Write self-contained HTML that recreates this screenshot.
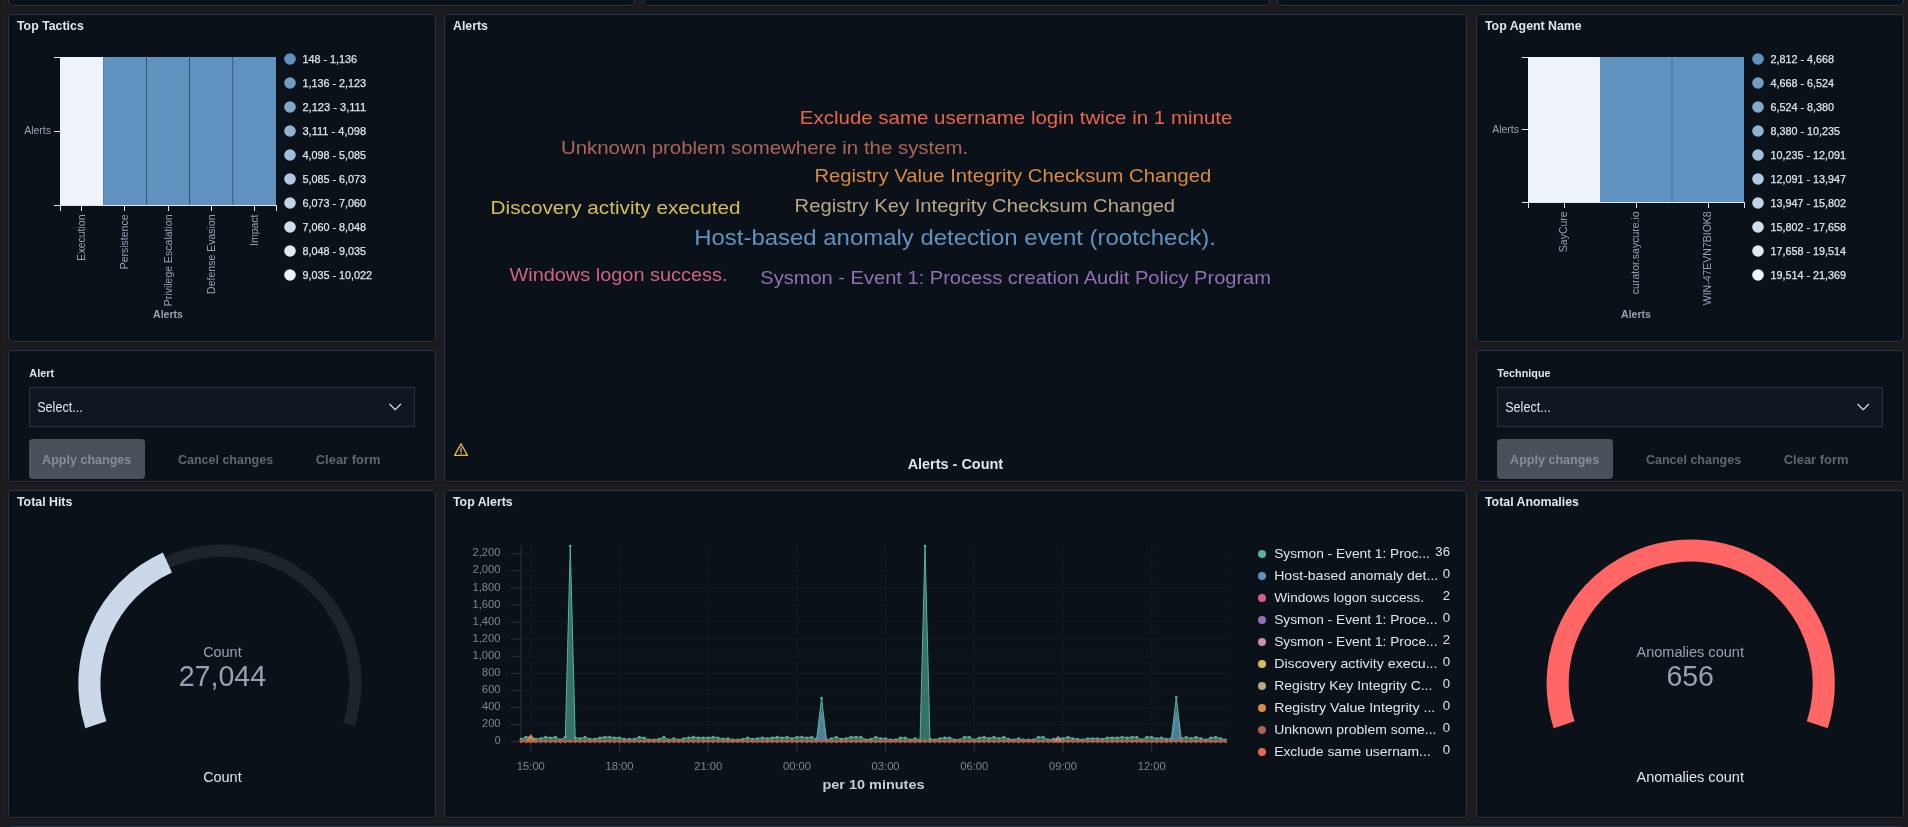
<!DOCTYPE html>
<html><head><meta charset="utf-8"><title>Dashboard</title>
<style>
html,body{margin:0;padding:0;}
body{width:1908px;height:827px;overflow:hidden;background:#1c1c20;position:relative;font-family:"Liberation Sans", sans-serif;}
.p{position:absolute;box-sizing:border-box;background:#0b1118;border:1px solid #283646;border-radius:4px;box-shadow:0 1px 2px rgba(0,0,0,0.35);}
svg{position:absolute;left:0;top:0;will-change:transform;}
svg text{font-family:"Liberation Sans", sans-serif;}
</style></head><body>

<div class="p" style="left:8px;top:-100px;width:627px;height:106px"></div>
<div class="p" style="left:643px;top:-100px;width:627px;height:106px"></div>
<div class="p" style="left:1277px;top:-100px;width:627px;height:106px"></div>
<div class="p" style="left:8px;top:14px;width:428px;height:328px"></div>
<div class="p" style="left:444px;top:14px;width:1023px;height:468px"></div>
<div class="p" style="left:1476px;top:14px;width:428px;height:328px"></div>
<div class="p" style="left:8px;top:350px;width:428px;height:132px"></div>
<div class="p" style="left:1476px;top:350px;width:428px;height:132px"></div>
<div class="p" style="left:8px;top:490px;width:428px;height:328px"></div>
<div class="p" style="left:444px;top:490px;width:1023px;height:328px"></div>
<div class="p" style="left:1476px;top:490px;width:428px;height:328px"></div>
<div class="p" style="left:8px;top:826px;width:1896px;height:100px"></div>
<svg width="1908" height="827" viewBox="0 0 1908 827">
<text x="17.00" y="30.00" font-size="12.35" fill="#dfe5ef" font-weight="bold">Top Tactics</text>
<text x="453.00" y="30.00" font-size="12.35" fill="#dfe5ef" font-weight="bold">Alerts</text>
<text x="1485.00" y="30.00" font-size="12.35" fill="#dfe5ef" font-weight="bold">Top Agent Name</text>
<text x="17.00" y="506.00" font-size="12.35" fill="#dfe5ef" font-weight="bold">Total Hits</text>
<text x="453.00" y="506.00" font-size="12.35" fill="#dfe5ef" font-weight="bold">Top Alerts</text>
<text x="1485.00" y="506.00" font-size="12.35" fill="#dfe5ef" font-weight="bold">Total Anomalies</text>
<rect x="60.00" y="57" width="43.20" height="148" fill="#eff3fa"/>
<rect x="103.20" y="57" width="43.20" height="148" fill="#6092c0"/>
<rect x="146.40" y="57" width="43.20" height="148" fill="#6092c0"/>
<rect x="189.60" y="57" width="43.20" height="148" fill="#6092c0"/>
<rect x="232.80" y="57" width="43.20" height="148" fill="#6092c0"/>
<rect x="145.90" y="57" width="1" height="148.4" fill="#0b1118" fill-opacity="0.3"/>
<rect x="189.10" y="57" width="1" height="148.4" fill="#0b1118" fill-opacity="0.3"/>
<rect x="232.30" y="57" width="1" height="148.4" fill="#0b1118" fill-opacity="0.3"/>
<rect x="54" y="57" width="6" height="1" fill="#e2e5ea"/>
<rect x="54" y="131" width="6" height="1" fill="#e2e5ea"/>
<rect x="54" y="205" width="223" height="1" fill="#e2e5ea"/>
<rect x="60" y="206" width="1" height="5" fill="#e2e5ea"/>
<rect x="81" y="206" width="1" height="5" fill="#e2e5ea"/>
<rect x="124" y="206" width="1" height="5" fill="#e2e5ea"/>
<rect x="168" y="206" width="1" height="5" fill="#e2e5ea"/>
<rect x="211" y="206" width="1" height="5" fill="#e2e5ea"/>
<rect x="254" y="206" width="1" height="5" fill="#e2e5ea"/>
<rect x="276" y="206" width="1" height="5" fill="#e2e5ea"/>
<text transform="translate(85.20,214.5) rotate(-90)" x="0" y="0" font-size="10.5" fill="#98a2b3" text-anchor="end">Execution</text>
<text transform="translate(128.40,214.5) rotate(-90)" x="0" y="0" font-size="10.5" fill="#98a2b3" text-anchor="end">Persistence</text>
<text transform="translate(171.60,214.5) rotate(-90)" x="0" y="0" font-size="10.5" fill="#98a2b3" text-anchor="end">Privilege Escalation</text>
<text transform="translate(214.80,214.5) rotate(-90)" x="0" y="0" font-size="10.5" fill="#98a2b3" text-anchor="end">Defense Evasion</text>
<text transform="translate(258.00,214.5) rotate(-90)" x="0" y="0" font-size="10.5" fill="#98a2b3" text-anchor="end">Impact</text>
<text x="168.00" y="317.50" font-size="10.5" fill="#98a2b3" font-weight="bold" text-anchor="middle">Alerts</text>
<text x="51.00" y="134.20" font-size="10.5" fill="#98a2b3" text-anchor="end">Alerts</text>
<circle cx="290" cy="59" r="5.8" fill="#6092c0"/>
<text x="302.40" y="63.20" font-size="11.6" fill="#dfe5ef" textLength="54.69" lengthAdjust="spacingAndGlyphs" stroke="#dfe5ef" stroke-width="0.25">148 - 1,136</text>
<circle cx="290" cy="83" r="5.8" fill="#709dc7"/>
<text x="302.40" y="87.20" font-size="11.6" fill="#dfe5ef" textLength="63.66" lengthAdjust="spacingAndGlyphs" stroke="#dfe5ef" stroke-width="0.25">1,136 - 2,123</text>
<circle cx="290" cy="107" r="5.8" fill="#80a8cd"/>
<text x="302.40" y="111.20" font-size="11.6" fill="#dfe5ef" textLength="63.66" lengthAdjust="spacingAndGlyphs" stroke="#dfe5ef" stroke-width="0.25">2,123 - 3,111</text>
<circle cx="290" cy="131" r="5.8" fill="#90b3d4"/>
<text x="302.40" y="135.20" font-size="11.6" fill="#dfe5ef" textLength="63.66" lengthAdjust="spacingAndGlyphs" stroke="#dfe5ef" stroke-width="0.25">3,111 - 4,098</text>
<circle cx="290" cy="155" r="5.8" fill="#a0beda"/>
<text x="302.40" y="159.20" font-size="11.6" fill="#dfe5ef" textLength="63.66" lengthAdjust="spacingAndGlyphs" stroke="#dfe5ef" stroke-width="0.25">4,098 - 5,085</text>
<circle cx="290" cy="179" r="5.8" fill="#b0c8e1"/>
<text x="302.40" y="183.20" font-size="11.6" fill="#dfe5ef" textLength="63.66" lengthAdjust="spacingAndGlyphs" stroke="#dfe5ef" stroke-width="0.25">5,085 - 6,073</text>
<circle cx="290" cy="203" r="5.8" fill="#c0d3e7"/>
<text x="302.40" y="207.20" font-size="11.6" fill="#dfe5ef" textLength="63.66" lengthAdjust="spacingAndGlyphs" stroke="#dfe5ef" stroke-width="0.25">6,073 - 7,060</text>
<circle cx="290" cy="227" r="5.8" fill="#d0deee"/>
<text x="302.40" y="231.20" font-size="11.6" fill="#dfe5ef" textLength="63.66" lengthAdjust="spacingAndGlyphs" stroke="#dfe5ef" stroke-width="0.25">7,060 - 8,048</text>
<circle cx="290" cy="251" r="5.8" fill="#e0e9f4"/>
<text x="302.40" y="255.20" font-size="11.6" fill="#dfe5ef" textLength="63.66" lengthAdjust="spacingAndGlyphs" stroke="#dfe5ef" stroke-width="0.25">8,048 - 9,035</text>
<circle cx="290" cy="275" r="5.8" fill="#f0f4fb"/>
<text x="302.40" y="279.20" font-size="11.6" fill="#dfe5ef" textLength="69.63" lengthAdjust="spacingAndGlyphs" stroke="#dfe5ef" stroke-width="0.25">9,035 - 10,022</text>
<rect x="1528.00" y="57" width="72.00" height="145" fill="#eff3fa"/>
<rect x="1600.00" y="57" width="72.00" height="145" fill="#6092c0"/>
<rect x="1672.00" y="57" width="72.00" height="145" fill="#6092c0"/>
<rect x="1671.00" y="57" width="2" height="145" fill="#0b1118" fill-opacity="0.12"/>
<rect x="1522" y="57" width="6" height="1" fill="#e2e5ea"/>
<rect x="1522" y="129" width="6" height="1" fill="#e2e5ea"/>
<rect x="1522" y="202" width="223" height="1" fill="#e2e5ea"/>
<rect x="1528" y="203" width="1" height="5" fill="#e2e5ea"/>
<rect x="1564" y="203" width="1" height="5" fill="#e2e5ea"/>
<rect x="1636" y="203" width="1" height="5" fill="#e2e5ea"/>
<rect x="1708" y="203" width="1" height="5" fill="#e2e5ea"/>
<rect x="1744" y="203" width="1" height="5" fill="#e2e5ea"/>
<text transform="translate(1567.00,211.3) rotate(-90)" x="0" y="0" font-size="10.5" fill="#98a2b3" text-anchor="end">SayCure</text>
<text transform="translate(1639.00,211.3) rotate(-90)" x="0" y="0" font-size="10.5" fill="#98a2b3" text-anchor="end">curator.saycure.io</text>
<text transform="translate(1711.00,211.3) rotate(-90)" x="0" y="0" font-size="10.5" fill="#98a2b3" text-anchor="end">WIN-47EVN7BIOK8</text>
<text x="1636.00" y="317.50" font-size="10.5" fill="#98a2b3" font-weight="bold" text-anchor="middle">Alerts</text>
<text x="1519.00" y="132.50" font-size="10.5" fill="#98a2b3" text-anchor="end">Alerts</text>
<circle cx="1758" cy="59" r="5.8" fill="#6092c0"/>
<text x="1770.40" y="63.20" font-size="11.6" fill="#dfe5ef" textLength="63.66" lengthAdjust="spacingAndGlyphs" stroke="#dfe5ef" stroke-width="0.25">2,812 - 4,668</text>
<circle cx="1758" cy="83" r="5.8" fill="#709dc7"/>
<text x="1770.40" y="87.20" font-size="11.6" fill="#dfe5ef" textLength="63.66" lengthAdjust="spacingAndGlyphs" stroke="#dfe5ef" stroke-width="0.25">4,668 - 6,524</text>
<circle cx="1758" cy="107" r="5.8" fill="#80a8cd"/>
<text x="1770.40" y="111.20" font-size="11.6" fill="#dfe5ef" textLength="63.66" lengthAdjust="spacingAndGlyphs" stroke="#dfe5ef" stroke-width="0.25">6,524 - 8,380</text>
<circle cx="1758" cy="131" r="5.8" fill="#90b3d4"/>
<text x="1770.40" y="135.20" font-size="11.6" fill="#dfe5ef" textLength="69.63" lengthAdjust="spacingAndGlyphs" stroke="#dfe5ef" stroke-width="0.25">8,380 - 10,235</text>
<circle cx="1758" cy="155" r="5.8" fill="#a0beda"/>
<text x="1770.40" y="159.20" font-size="11.6" fill="#dfe5ef" textLength="75.61" lengthAdjust="spacingAndGlyphs" stroke="#dfe5ef" stroke-width="0.25">10,235 - 12,091</text>
<circle cx="1758" cy="179" r="5.8" fill="#b0c8e1"/>
<text x="1770.40" y="183.20" font-size="11.6" fill="#dfe5ef" textLength="75.61" lengthAdjust="spacingAndGlyphs" stroke="#dfe5ef" stroke-width="0.25">12,091 - 13,947</text>
<circle cx="1758" cy="203" r="5.8" fill="#c0d3e7"/>
<text x="1770.40" y="207.20" font-size="11.6" fill="#dfe5ef" textLength="75.61" lengthAdjust="spacingAndGlyphs" stroke="#dfe5ef" stroke-width="0.25">13,947 - 15,802</text>
<circle cx="1758" cy="227" r="5.8" fill="#d0deee"/>
<text x="1770.40" y="231.20" font-size="11.6" fill="#dfe5ef" textLength="75.61" lengthAdjust="spacingAndGlyphs" stroke="#dfe5ef" stroke-width="0.25">15,802 - 17,658</text>
<circle cx="1758" cy="251" r="5.8" fill="#e0e9f4"/>
<text x="1770.40" y="255.20" font-size="11.6" fill="#dfe5ef" textLength="75.61" lengthAdjust="spacingAndGlyphs" stroke="#dfe5ef" stroke-width="0.25">17,658 - 19,514</text>
<circle cx="1758" cy="275" r="5.8" fill="#f0f4fb"/>
<text x="1770.40" y="279.20" font-size="11.6" fill="#dfe5ef" textLength="75.61" lengthAdjust="spacingAndGlyphs" stroke="#dfe5ef" stroke-width="0.25">19,514 - 21,369</text>
<text x="799.80" y="123.60" font-size="18.31" fill="#e7664c" textLength="432.60" lengthAdjust="spacingAndGlyphs">Exclude same username login twice in 1 minute</text>
<text x="560.90" y="154.00" font-size="18.31" fill="#aa6556" textLength="407.40" lengthAdjust="spacingAndGlyphs">Unknown problem somewhere in the system.</text>
<text x="814.40" y="182.10" font-size="18.31" fill="#da8b45" textLength="396.80" lengthAdjust="spacingAndGlyphs">Registry Value Integrity Checksum Changed</text>
<text x="490.60" y="213.90" font-size="18.31" fill="#d6bf57" textLength="249.90" lengthAdjust="spacingAndGlyphs">Discovery activity executed</text>
<text x="794.60" y="211.80" font-size="18.31" fill="#b9a888" textLength="380.50" lengthAdjust="spacingAndGlyphs">Registry Key Integrity Checksum Changed</text>
<text x="694.20" y="245.00" font-size="21.37" fill="#6092c0" textLength="521.80" lengthAdjust="spacingAndGlyphs">Host-based anomaly detection event (rootcheck).</text>
<text x="509.40" y="280.80" font-size="18.31" fill="#d36086" textLength="218.20" lengthAdjust="spacingAndGlyphs">Windows logon success.</text>
<text x="760.30" y="284.30" font-size="18.31" fill="#9170b8" textLength="510.70" lengthAdjust="spacingAndGlyphs">Sysmon - Event 1: Process creation Audit Policy Program</text>
<g transform="translate(454,443)" fill="none" stroke="#e9b85e" stroke-width="1.3" stroke-linejoin="round"><path d="M7,0.8 L13.4,12.4 L0.6,12.4 Z"/></g>
<rect x="460.4" y="447.3" width="1.3" height="4.8" fill="#e9b85e"/><rect x="460.4" y="453" width="1.3" height="1.1" fill="#e9b85e"/>
<text x="955.40" y="469.00" font-size="14" fill="#dfe5ef" font-weight="bold" text-anchor="middle" textLength="95.50" lengthAdjust="spacingAndGlyphs">Alerts - Count</text>
<text x="29.30" y="377.00" font-size="11" fill="#dfe5ef" font-weight="bold" textLength="24.70" lengthAdjust="spacingAndGlyphs">Alert</text>
<rect x="29.5" y="387.5" width="385" height="39" fill="#101721" stroke="#2b3340" stroke-width="1"/>
<text x="37.20" y="411.60" font-size="14" fill="#dfe5ef" textLength="45.50" lengthAdjust="spacingAndGlyphs">Select...</text>
<path d="M389.5,404 L395.2,409.6 L400.9,404" fill="none" stroke="#dfe5ef" stroke-width="1.2"/>
<rect x="29" y="439" width="116" height="40" rx="4" fill="#4b515b"/>
<text x="42.10" y="464.10" font-size="13" fill="#868d97" font-weight="bold" textLength="89.20" lengthAdjust="spacingAndGlyphs">Apply changes</text>
<text x="178.00" y="464.10" font-size="13" fill="#5f6670" font-weight="bold" textLength="95.10" lengthAdjust="spacingAndGlyphs">Cancel changes</text>
<text x="315.80" y="464.10" font-size="13" fill="#5f6670" font-weight="bold" textLength="64.60" lengthAdjust="spacingAndGlyphs">Clear form</text>
<text x="1497.30" y="377.00" font-size="11" fill="#dfe5ef" font-weight="bold" textLength="53.20" lengthAdjust="spacingAndGlyphs">Technique</text>
<rect x="1497.5" y="387.5" width="385" height="39" fill="#101721" stroke="#2b3340" stroke-width="1"/>
<text x="1505.20" y="411.60" font-size="14" fill="#dfe5ef" textLength="45.50" lengthAdjust="spacingAndGlyphs">Select...</text>
<path d="M1857.5,404 L1863.2,409.6 L1868.9,404" fill="none" stroke="#dfe5ef" stroke-width="1.2"/>
<rect x="1497" y="439" width="116" height="40" rx="4" fill="#4b515b"/>
<text x="1510.10" y="464.10" font-size="13" fill="#868d97" font-weight="bold" textLength="89.20" lengthAdjust="spacingAndGlyphs">Apply changes</text>
<text x="1646.00" y="464.10" font-size="13" fill="#5f6670" font-weight="bold" textLength="95.10" lengthAdjust="spacingAndGlyphs">Cancel changes</text>
<text x="1783.80" y="464.10" font-size="13" fill="#5f6670" font-weight="bold" textLength="64.60" lengthAdjust="spacingAndGlyphs">Clear form</text>
<path d="M90.01,726.62 A139.2,139.2 0 1 1 354.79,726.62 L342.99,722.78 A126.8,126.8 0 1 0 101.81,722.78 Z" fill="#1f232b"/>
<path d="M85.35,728.13 A144.1,144.1 0 0 1 162.85,552.38 L171.99,572.50 A122,122 0 0 0 106.37,721.30 Z" fill="#cbd8ea"/>
<text x="222.40" y="657.00" font-size="14" fill="#98a2b3" text-anchor="middle" textLength="38.50" lengthAdjust="spacingAndGlyphs">Count</text>
<text x="222.40" y="686.00" font-size="29" fill="#98a2b3" text-anchor="middle" textLength="87.50" lengthAdjust="spacingAndGlyphs">27,044</text>
<text x="222.40" y="782.00" font-size="14" fill="#dfe5ef" text-anchor="middle" textLength="38.50" lengthAdjust="spacingAndGlyphs">Count</text>
<path d="M1558.31,726.62 A139.2,139.2 0 1 1 1823.09,726.62 L1811.29,722.78 A126.8,126.8 0 1 0 1570.11,722.78 Z" fill="#1f232b"/>
<path d="M1553.65,728.13 A144.1,144.1 0 1 1 1827.75,728.13 L1806.73,721.30 A122,122 0 1 0 1574.67,721.30 Z" fill="#ff6666"/>
<text x="1690.20" y="657.00" font-size="14" fill="#98a2b3" text-anchor="middle" textLength="107.50" lengthAdjust="spacingAndGlyphs">Anomalies count</text>
<text x="1690.20" y="686.00" font-size="29" fill="#98a2b3" text-anchor="middle" textLength="47.50" lengthAdjust="spacingAndGlyphs">656</text>
<text x="1690.20" y="782.00" font-size="14" fill="#dfe5ef" text-anchor="middle" textLength="107.50" lengthAdjust="spacingAndGlyphs">Anomalies count</text>
<rect x="521" y="741.20" width="705" height="1" fill="#151b22"/>
<rect x="511" y="741.20" width="10" height="1" fill="#303236"/>
<text x="500.50" y="744.30" font-size="10.6" fill="#80858c" text-anchor="end" textLength="5.76" lengthAdjust="spacingAndGlyphs">0</text>
<rect x="521" y="724.12" width="705" height="1" fill="#151b22"/>
<rect x="511" y="724.12" width="10" height="1" fill="#303236"/>
<text x="500.50" y="727.22" font-size="10.6" fill="#80858c" text-anchor="end" textLength="18.49" lengthAdjust="spacingAndGlyphs">200</text>
<rect x="521" y="707.03" width="705" height="1" fill="#151b22"/>
<rect x="511" y="707.03" width="10" height="1" fill="#303236"/>
<text x="500.50" y="710.13" font-size="10.6" fill="#80858c" text-anchor="end" textLength="18.49" lengthAdjust="spacingAndGlyphs">400</text>
<rect x="521" y="689.95" width="705" height="1" fill="#151b22"/>
<rect x="511" y="689.95" width="10" height="1" fill="#303236"/>
<text x="500.50" y="693.05" font-size="10.6" fill="#80858c" text-anchor="end" textLength="18.49" lengthAdjust="spacingAndGlyphs">600</text>
<rect x="521" y="672.86" width="705" height="1" fill="#151b22"/>
<rect x="511" y="672.86" width="10" height="1" fill="#303236"/>
<text x="500.50" y="675.96" font-size="10.6" fill="#80858c" text-anchor="end" textLength="18.49" lengthAdjust="spacingAndGlyphs">800</text>
<rect x="521" y="655.78" width="705" height="1" fill="#151b22"/>
<rect x="511" y="655.78" width="10" height="1" fill="#303236"/>
<text x="500.50" y="658.88" font-size="10.6" fill="#80858c" text-anchor="end" textLength="28.03" lengthAdjust="spacingAndGlyphs">1,000</text>
<rect x="521" y="638.69" width="705" height="1" fill="#151b22"/>
<rect x="511" y="638.69" width="10" height="1" fill="#303236"/>
<text x="500.50" y="641.79" font-size="10.6" fill="#80858c" text-anchor="end" textLength="28.03" lengthAdjust="spacingAndGlyphs">1,200</text>
<rect x="521" y="621.61" width="705" height="1" fill="#151b22"/>
<rect x="511" y="621.61" width="10" height="1" fill="#303236"/>
<text x="500.50" y="624.71" font-size="10.6" fill="#80858c" text-anchor="end" textLength="28.03" lengthAdjust="spacingAndGlyphs">1,400</text>
<rect x="521" y="604.52" width="705" height="1" fill="#151b22"/>
<rect x="511" y="604.52" width="10" height="1" fill="#303236"/>
<text x="500.50" y="607.62" font-size="10.6" fill="#80858c" text-anchor="end" textLength="28.03" lengthAdjust="spacingAndGlyphs">1,600</text>
<rect x="521" y="587.44" width="705" height="1" fill="#151b22"/>
<rect x="511" y="587.44" width="10" height="1" fill="#303236"/>
<text x="500.50" y="590.54" font-size="10.6" fill="#80858c" text-anchor="end" textLength="28.03" lengthAdjust="spacingAndGlyphs">1,800</text>
<rect x="521" y="570.35" width="705" height="1" fill="#151b22"/>
<rect x="511" y="570.35" width="10" height="1" fill="#303236"/>
<text x="500.50" y="573.45" font-size="10.6" fill="#80858c" text-anchor="end" textLength="28.03" lengthAdjust="spacingAndGlyphs">2,000</text>
<rect x="521" y="553.27" width="705" height="1" fill="#151b22"/>
<rect x="511" y="553.27" width="10" height="1" fill="#303236"/>
<text x="500.50" y="556.37" font-size="10.6" fill="#80858c" text-anchor="end" textLength="28.03" lengthAdjust="spacingAndGlyphs">2,200</text>
<rect x="530.35" y="546" width="1" height="195.7" fill="#151b22"/>
<rect x="530.35" y="741.7" width="1" height="10" fill="#303236"/>
<text x="530.85" y="769.70" font-size="10.6" fill="#80858c" text-anchor="middle" textLength="28.00" lengthAdjust="spacingAndGlyphs">15:00</text>
<rect x="619.04" y="546" width="1" height="195.7" fill="#151b22"/>
<rect x="619.04" y="741.7" width="1" height="10" fill="#303236"/>
<text x="619.54" y="769.70" font-size="10.6" fill="#80858c" text-anchor="middle" textLength="28.00" lengthAdjust="spacingAndGlyphs">18:00</text>
<rect x="707.73" y="546" width="1" height="195.7" fill="#151b22"/>
<rect x="707.73" y="741.7" width="1" height="10" fill="#303236"/>
<text x="708.23" y="769.70" font-size="10.6" fill="#80858c" text-anchor="middle" textLength="28.00" lengthAdjust="spacingAndGlyphs">21:00</text>
<rect x="796.41" y="546" width="1" height="195.7" fill="#151b22"/>
<rect x="796.41" y="741.7" width="1" height="10" fill="#303236"/>
<text x="796.91" y="769.70" font-size="10.6" fill="#80858c" text-anchor="middle" textLength="28.00" lengthAdjust="spacingAndGlyphs">00:00</text>
<rect x="885.10" y="546" width="1" height="195.7" fill="#151b22"/>
<rect x="885.10" y="741.7" width="1" height="10" fill="#303236"/>
<text x="885.60" y="769.70" font-size="10.6" fill="#80858c" text-anchor="middle" textLength="28.00" lengthAdjust="spacingAndGlyphs">03:00</text>
<rect x="973.78" y="546" width="1" height="195.7" fill="#151b22"/>
<rect x="973.78" y="741.7" width="1" height="10" fill="#303236"/>
<text x="974.28" y="769.70" font-size="10.6" fill="#80858c" text-anchor="middle" textLength="28.00" lengthAdjust="spacingAndGlyphs">06:00</text>
<rect x="1062.47" y="546" width="1" height="195.7" fill="#151b22"/>
<rect x="1062.47" y="741.7" width="1" height="10" fill="#303236"/>
<text x="1062.97" y="769.70" font-size="10.6" fill="#80858c" text-anchor="middle" textLength="28.00" lengthAdjust="spacingAndGlyphs">09:00</text>
<rect x="1151.16" y="546" width="1" height="195.7" fill="#151b22"/>
<rect x="1151.16" y="741.7" width="1" height="10" fill="#303236"/>
<text x="1151.66" y="769.70" font-size="10.6" fill="#80858c" text-anchor="middle" textLength="28.00" lengthAdjust="spacingAndGlyphs">12:00</text>
<rect x="520.5" y="546" width="1" height="196.2" fill="#303236"/>
<text x="873.50" y="788.50" font-size="12.5" fill="#c9ced6" font-weight="bold" text-anchor="middle" textLength="102.00" lengthAdjust="spacingAndGlyphs">per 10 minutes</text>
<path d="M521.00,741.7 L521.00,739.14 L525.93,737.09 L530.85,737.09 L535.78,739.14 L540.71,738.45 L545.63,737.09 L550.56,737.77 L555.49,737.09 L560.42,739.82 L565.34,737.09 L570.27,546.08 L575.20,737.77 L580.12,738.45 L585.05,737.09 L589.98,739.14 L594.90,739.14 L599.83,737.77 L604.76,737.09 L609.69,737.09 L614.61,737.77 L619.54,737.77 L624.47,739.14 L629.39,739.14 L634.32,739.14 L639.25,737.09 L644.17,737.77 L649.10,739.82 L654.03,739.82 L658.96,739.14 L663.88,737.09 L668.81,739.82 L673.74,738.45 L678.66,739.82 L683.59,738.45 L688.52,737.77 L693.44,737.09 L698.37,737.77 L703.30,737.77 L708.23,737.77 L713.15,737.09 L718.08,737.77 L723.01,739.14 L727.93,738.45 L732.86,739.82 L737.79,739.82 L742.71,739.14 L747.64,737.77 L752.57,739.14 L757.50,738.45 L762.42,737.77 L767.35,738.45 L772.28,737.77 L777.20,737.09 L782.13,737.77 L787.06,737.09 L791.98,738.45 L796.91,737.09 L801.84,737.09 L806.77,737.77 L811.69,737.09 L816.62,739.14 L821.55,698.13 L826.47,739.82 L831.40,738.45 L836.33,737.09 L841.25,739.14 L846.18,738.45 L851.11,737.09 L856.04,737.09 L860.96,737.09 L865.89,739.82 L870.82,739.14 L875.74,737.09 L880.67,738.45 L885.60,738.45 L890.52,739.82 L895.45,739.82 L900.38,737.77 L905.31,737.77 L910.23,739.82 L915.16,738.45 L920.09,739.82 L925.01,546.08 L929.94,739.14 L934.87,739.82 L939.79,738.45 L944.72,737.77 L949.65,737.77 L954.58,739.82 L959.50,739.82 L964.43,737.09 L969.36,737.09 L974.28,739.82 L979.21,737.77 L984.14,737.09 L989.06,738.45 L993.99,737.09 L998.92,738.45 L1003.85,737.09 L1008.77,739.14 L1013.70,739.82 L1018.63,738.45 L1023.55,739.82 L1028.48,739.82 L1033.41,739.82 L1038.34,737.09 L1043.26,737.09 L1048.19,739.82 L1053.12,739.14 L1058.04,737.77 L1062.97,738.45 L1067.90,737.09 L1072.82,738.45 L1077.75,739.14 L1082.68,739.82 L1087.61,738.45 L1092.53,738.45 L1097.46,738.45 L1102.39,739.14 L1107.31,737.77 L1112.24,737.77 L1117.17,737.77 L1122.09,737.09 L1127.02,737.77 L1131.95,737.09 L1136.88,737.09 L1141.80,739.82 L1146.73,737.09 L1151.66,737.09 L1156.58,738.45 L1161.51,737.77 L1166.44,739.14 L1171.36,738.45 L1176.29,697.28 L1181.22,738.45 L1186.14,737.09 L1191.07,738.45 L1196.00,737.09 L1200.93,738.45 L1205.85,739.82 L1210.78,737.77 L1215.71,737.09 L1220.63,738.45 L1225.56,739.82 L1225.56,741.7 Z" fill="#54b399" fill-opacity="0.6"/>
<polyline points="521.00,739.14 525.93,737.09 530.85,737.09 535.78,739.14 540.71,738.45 545.63,737.09 550.56,737.77 555.49,737.09 560.42,739.82 565.34,737.09 570.27,546.08 575.20,737.77 580.12,738.45 585.05,737.09 589.98,739.14 594.90,739.14 599.83,737.77 604.76,737.09 609.69,737.09 614.61,737.77 619.54,737.77 624.47,739.14 629.39,739.14 634.32,739.14 639.25,737.09 644.17,737.77 649.10,739.82 654.03,739.82 658.96,739.14 663.88,737.09 668.81,739.82 673.74,738.45 678.66,739.82 683.59,738.45 688.52,737.77 693.44,737.09 698.37,737.77 703.30,737.77 708.23,737.77 713.15,737.09 718.08,737.77 723.01,739.14 727.93,738.45 732.86,739.82 737.79,739.82 742.71,739.14 747.64,737.77 752.57,739.14 757.50,738.45 762.42,737.77 767.35,738.45 772.28,737.77 777.20,737.09 782.13,737.77 787.06,737.09 791.98,738.45 796.91,737.09 801.84,737.09 806.77,737.77 811.69,737.09 816.62,739.14 821.55,698.13 826.47,739.82 831.40,738.45 836.33,737.09 841.25,739.14 846.18,738.45 851.11,737.09 856.04,737.09 860.96,737.09 865.89,739.82 870.82,739.14 875.74,737.09 880.67,738.45 885.60,738.45 890.52,739.82 895.45,739.82 900.38,737.77 905.31,737.77 910.23,739.82 915.16,738.45 920.09,739.82 925.01,546.08 929.94,739.14 934.87,739.82 939.79,738.45 944.72,737.77 949.65,737.77 954.58,739.82 959.50,739.82 964.43,737.09 969.36,737.09 974.28,739.82 979.21,737.77 984.14,737.09 989.06,738.45 993.99,737.09 998.92,738.45 1003.85,737.09 1008.77,739.14 1013.70,739.82 1018.63,738.45 1023.55,739.82 1028.48,739.82 1033.41,739.82 1038.34,737.09 1043.26,737.09 1048.19,739.82 1053.12,739.14 1058.04,737.77 1062.97,738.45 1067.90,737.09 1072.82,738.45 1077.75,739.14 1082.68,739.82 1087.61,738.45 1092.53,738.45 1097.46,738.45 1102.39,739.14 1107.31,737.77 1112.24,737.77 1117.17,737.77 1122.09,737.09 1127.02,737.77 1131.95,737.09 1136.88,737.09 1141.80,739.82 1146.73,737.09 1151.66,737.09 1156.58,738.45 1161.51,737.77 1166.44,739.14 1171.36,738.45 1176.29,697.28 1181.22,738.45 1186.14,737.09 1191.07,738.45 1196.00,737.09 1200.93,738.45 1205.85,739.82 1210.78,737.77 1215.71,737.09 1220.63,738.45 1225.56,739.82" fill="none" stroke="#54b399" stroke-width="1"/>
<circle cx="521.00" cy="739.14" r="1.3" fill="#54b399"/>
<circle cx="525.93" cy="737.09" r="1.3" fill="#54b399"/>
<circle cx="530.85" cy="737.09" r="1.3" fill="#54b399"/>
<circle cx="535.78" cy="739.14" r="1.3" fill="#54b399"/>
<circle cx="540.71" cy="738.45" r="1.3" fill="#54b399"/>
<circle cx="545.63" cy="737.09" r="1.3" fill="#54b399"/>
<circle cx="550.56" cy="737.77" r="1.3" fill="#54b399"/>
<circle cx="555.49" cy="737.09" r="1.3" fill="#54b399"/>
<circle cx="560.42" cy="739.82" r="1.3" fill="#54b399"/>
<circle cx="565.34" cy="737.09" r="1.3" fill="#54b399"/>
<circle cx="570.27" cy="546.08" r="1.3" fill="#54b399"/>
<circle cx="575.20" cy="737.77" r="1.3" fill="#54b399"/>
<circle cx="580.12" cy="738.45" r="1.3" fill="#54b399"/>
<circle cx="585.05" cy="737.09" r="1.3" fill="#54b399"/>
<circle cx="589.98" cy="739.14" r="1.3" fill="#54b399"/>
<circle cx="594.90" cy="739.14" r="1.3" fill="#54b399"/>
<circle cx="599.83" cy="737.77" r="1.3" fill="#54b399"/>
<circle cx="604.76" cy="737.09" r="1.3" fill="#54b399"/>
<circle cx="609.69" cy="737.09" r="1.3" fill="#54b399"/>
<circle cx="614.61" cy="737.77" r="1.3" fill="#54b399"/>
<circle cx="619.54" cy="737.77" r="1.3" fill="#54b399"/>
<circle cx="624.47" cy="739.14" r="1.3" fill="#54b399"/>
<circle cx="629.39" cy="739.14" r="1.3" fill="#54b399"/>
<circle cx="634.32" cy="739.14" r="1.3" fill="#54b399"/>
<circle cx="639.25" cy="737.09" r="1.3" fill="#54b399"/>
<circle cx="644.17" cy="737.77" r="1.3" fill="#54b399"/>
<circle cx="649.10" cy="739.82" r="1.3" fill="#54b399"/>
<circle cx="654.03" cy="739.82" r="1.3" fill="#54b399"/>
<circle cx="658.96" cy="739.14" r="1.3" fill="#54b399"/>
<circle cx="663.88" cy="737.09" r="1.3" fill="#54b399"/>
<circle cx="668.81" cy="739.82" r="1.3" fill="#54b399"/>
<circle cx="673.74" cy="738.45" r="1.3" fill="#54b399"/>
<circle cx="678.66" cy="739.82" r="1.3" fill="#54b399"/>
<circle cx="683.59" cy="738.45" r="1.3" fill="#54b399"/>
<circle cx="688.52" cy="737.77" r="1.3" fill="#54b399"/>
<circle cx="693.44" cy="737.09" r="1.3" fill="#54b399"/>
<circle cx="698.37" cy="737.77" r="1.3" fill="#54b399"/>
<circle cx="703.30" cy="737.77" r="1.3" fill="#54b399"/>
<circle cx="708.23" cy="737.77" r="1.3" fill="#54b399"/>
<circle cx="713.15" cy="737.09" r="1.3" fill="#54b399"/>
<circle cx="718.08" cy="737.77" r="1.3" fill="#54b399"/>
<circle cx="723.01" cy="739.14" r="1.3" fill="#54b399"/>
<circle cx="727.93" cy="738.45" r="1.3" fill="#54b399"/>
<circle cx="732.86" cy="739.82" r="1.3" fill="#54b399"/>
<circle cx="737.79" cy="739.82" r="1.3" fill="#54b399"/>
<circle cx="742.71" cy="739.14" r="1.3" fill="#54b399"/>
<circle cx="747.64" cy="737.77" r="1.3" fill="#54b399"/>
<circle cx="752.57" cy="739.14" r="1.3" fill="#54b399"/>
<circle cx="757.50" cy="738.45" r="1.3" fill="#54b399"/>
<circle cx="762.42" cy="737.77" r="1.3" fill="#54b399"/>
<circle cx="767.35" cy="738.45" r="1.3" fill="#54b399"/>
<circle cx="772.28" cy="737.77" r="1.3" fill="#54b399"/>
<circle cx="777.20" cy="737.09" r="1.3" fill="#54b399"/>
<circle cx="782.13" cy="737.77" r="1.3" fill="#54b399"/>
<circle cx="787.06" cy="737.09" r="1.3" fill="#54b399"/>
<circle cx="791.98" cy="738.45" r="1.3" fill="#54b399"/>
<circle cx="796.91" cy="737.09" r="1.3" fill="#54b399"/>
<circle cx="801.84" cy="737.09" r="1.3" fill="#54b399"/>
<circle cx="806.77" cy="737.77" r="1.3" fill="#54b399"/>
<circle cx="811.69" cy="737.09" r="1.3" fill="#54b399"/>
<circle cx="816.62" cy="739.14" r="1.3" fill="#54b399"/>
<circle cx="821.55" cy="698.13" r="1.3" fill="#54b399"/>
<circle cx="826.47" cy="739.82" r="1.3" fill="#54b399"/>
<circle cx="831.40" cy="738.45" r="1.3" fill="#54b399"/>
<circle cx="836.33" cy="737.09" r="1.3" fill="#54b399"/>
<circle cx="841.25" cy="739.14" r="1.3" fill="#54b399"/>
<circle cx="846.18" cy="738.45" r="1.3" fill="#54b399"/>
<circle cx="851.11" cy="737.09" r="1.3" fill="#54b399"/>
<circle cx="856.04" cy="737.09" r="1.3" fill="#54b399"/>
<circle cx="860.96" cy="737.09" r="1.3" fill="#54b399"/>
<circle cx="865.89" cy="739.82" r="1.3" fill="#54b399"/>
<circle cx="870.82" cy="739.14" r="1.3" fill="#54b399"/>
<circle cx="875.74" cy="737.09" r="1.3" fill="#54b399"/>
<circle cx="880.67" cy="738.45" r="1.3" fill="#54b399"/>
<circle cx="885.60" cy="738.45" r="1.3" fill="#54b399"/>
<circle cx="890.52" cy="739.82" r="1.3" fill="#54b399"/>
<circle cx="895.45" cy="739.82" r="1.3" fill="#54b399"/>
<circle cx="900.38" cy="737.77" r="1.3" fill="#54b399"/>
<circle cx="905.31" cy="737.77" r="1.3" fill="#54b399"/>
<circle cx="910.23" cy="739.82" r="1.3" fill="#54b399"/>
<circle cx="915.16" cy="738.45" r="1.3" fill="#54b399"/>
<circle cx="920.09" cy="739.82" r="1.3" fill="#54b399"/>
<circle cx="925.01" cy="546.08" r="1.3" fill="#54b399"/>
<circle cx="929.94" cy="739.14" r="1.3" fill="#54b399"/>
<circle cx="934.87" cy="739.82" r="1.3" fill="#54b399"/>
<circle cx="939.79" cy="738.45" r="1.3" fill="#54b399"/>
<circle cx="944.72" cy="737.77" r="1.3" fill="#54b399"/>
<circle cx="949.65" cy="737.77" r="1.3" fill="#54b399"/>
<circle cx="954.58" cy="739.82" r="1.3" fill="#54b399"/>
<circle cx="959.50" cy="739.82" r="1.3" fill="#54b399"/>
<circle cx="964.43" cy="737.09" r="1.3" fill="#54b399"/>
<circle cx="969.36" cy="737.09" r="1.3" fill="#54b399"/>
<circle cx="974.28" cy="739.82" r="1.3" fill="#54b399"/>
<circle cx="979.21" cy="737.77" r="1.3" fill="#54b399"/>
<circle cx="984.14" cy="737.09" r="1.3" fill="#54b399"/>
<circle cx="989.06" cy="738.45" r="1.3" fill="#54b399"/>
<circle cx="993.99" cy="737.09" r="1.3" fill="#54b399"/>
<circle cx="998.92" cy="738.45" r="1.3" fill="#54b399"/>
<circle cx="1003.85" cy="737.09" r="1.3" fill="#54b399"/>
<circle cx="1008.77" cy="739.14" r="1.3" fill="#54b399"/>
<circle cx="1013.70" cy="739.82" r="1.3" fill="#54b399"/>
<circle cx="1018.63" cy="738.45" r="1.3" fill="#54b399"/>
<circle cx="1023.55" cy="739.82" r="1.3" fill="#54b399"/>
<circle cx="1028.48" cy="739.82" r="1.3" fill="#54b399"/>
<circle cx="1033.41" cy="739.82" r="1.3" fill="#54b399"/>
<circle cx="1038.34" cy="737.09" r="1.3" fill="#54b399"/>
<circle cx="1043.26" cy="737.09" r="1.3" fill="#54b399"/>
<circle cx="1048.19" cy="739.82" r="1.3" fill="#54b399"/>
<circle cx="1053.12" cy="739.14" r="1.3" fill="#54b399"/>
<circle cx="1058.04" cy="737.77" r="1.3" fill="#54b399"/>
<circle cx="1062.97" cy="738.45" r="1.3" fill="#54b399"/>
<circle cx="1067.90" cy="737.09" r="1.3" fill="#54b399"/>
<circle cx="1072.82" cy="738.45" r="1.3" fill="#54b399"/>
<circle cx="1077.75" cy="739.14" r="1.3" fill="#54b399"/>
<circle cx="1082.68" cy="739.82" r="1.3" fill="#54b399"/>
<circle cx="1087.61" cy="738.45" r="1.3" fill="#54b399"/>
<circle cx="1092.53" cy="738.45" r="1.3" fill="#54b399"/>
<circle cx="1097.46" cy="738.45" r="1.3" fill="#54b399"/>
<circle cx="1102.39" cy="739.14" r="1.3" fill="#54b399"/>
<circle cx="1107.31" cy="737.77" r="1.3" fill="#54b399"/>
<circle cx="1112.24" cy="737.77" r="1.3" fill="#54b399"/>
<circle cx="1117.17" cy="737.77" r="1.3" fill="#54b399"/>
<circle cx="1122.09" cy="737.09" r="1.3" fill="#54b399"/>
<circle cx="1127.02" cy="737.77" r="1.3" fill="#54b399"/>
<circle cx="1131.95" cy="737.09" r="1.3" fill="#54b399"/>
<circle cx="1136.88" cy="737.09" r="1.3" fill="#54b399"/>
<circle cx="1141.80" cy="739.82" r="1.3" fill="#54b399"/>
<circle cx="1146.73" cy="737.09" r="1.3" fill="#54b399"/>
<circle cx="1151.66" cy="737.09" r="1.3" fill="#54b399"/>
<circle cx="1156.58" cy="738.45" r="1.3" fill="#54b399"/>
<circle cx="1161.51" cy="737.77" r="1.3" fill="#54b399"/>
<circle cx="1166.44" cy="739.14" r="1.3" fill="#54b399"/>
<circle cx="1171.36" cy="738.45" r="1.3" fill="#54b399"/>
<circle cx="1176.29" cy="697.28" r="1.3" fill="#54b399"/>
<circle cx="1181.22" cy="738.45" r="1.3" fill="#54b399"/>
<circle cx="1186.14" cy="737.09" r="1.3" fill="#54b399"/>
<circle cx="1191.07" cy="738.45" r="1.3" fill="#54b399"/>
<circle cx="1196.00" cy="737.09" r="1.3" fill="#54b399"/>
<circle cx="1200.93" cy="738.45" r="1.3" fill="#54b399"/>
<circle cx="1205.85" cy="739.82" r="1.3" fill="#54b399"/>
<circle cx="1210.78" cy="737.77" r="1.3" fill="#54b399"/>
<circle cx="1215.71" cy="737.09" r="1.3" fill="#54b399"/>
<circle cx="1220.63" cy="738.45" r="1.3" fill="#54b399"/>
<circle cx="1225.56" cy="739.82" r="1.3" fill="#54b399"/>
<path d="M521.00,741.7 L521.00,741.70 L525.93,741.70 L530.85,741.70 L535.78,741.70 L540.71,741.70 L545.63,741.70 L550.56,741.70 L555.49,741.70 L560.42,741.70 L565.34,741.70 L570.27,741.70 L575.20,741.70 L580.12,741.70 L585.05,741.70 L589.98,741.70 L594.90,741.70 L599.83,741.70 L604.76,741.70 L609.69,741.70 L614.61,741.70 L619.54,741.70 L624.47,741.70 L629.39,741.70 L634.32,741.70 L639.25,741.70 L644.17,741.70 L649.10,741.70 L654.03,741.70 L658.96,741.70 L663.88,741.70 L668.81,741.70 L673.74,741.70 L678.66,741.70 L683.59,741.70 L688.52,741.70 L693.44,741.70 L698.37,741.70 L703.30,741.70 L708.23,741.70 L713.15,741.70 L718.08,741.70 L723.01,741.70 L727.93,741.70 L732.86,741.70 L737.79,741.70 L742.71,741.70 L747.64,741.70 L752.57,741.70 L757.50,741.70 L762.42,741.70 L767.35,741.70 L772.28,741.70 L777.20,741.70 L782.13,741.70 L787.06,741.70 L791.98,741.70 L796.91,741.70 L801.84,741.70 L806.77,741.70 L811.69,741.70 L816.62,741.70 L821.55,712.66 L826.47,741.70 L831.40,741.70 L836.33,741.70 L841.25,741.70 L846.18,741.70 L851.11,741.70 L856.04,741.70 L860.96,741.70 L865.89,741.70 L870.82,741.70 L875.74,741.70 L880.67,741.70 L885.60,741.70 L890.52,741.70 L895.45,741.70 L900.38,741.70 L905.31,741.70 L910.23,741.70 L915.16,741.70 L920.09,741.70 L925.01,741.70 L929.94,741.70 L934.87,741.70 L939.79,741.70 L944.72,741.70 L949.65,741.70 L954.58,741.70 L959.50,741.70 L964.43,741.70 L969.36,741.70 L974.28,741.70 L979.21,741.70 L984.14,741.70 L989.06,741.70 L993.99,741.70 L998.92,741.70 L1003.85,741.70 L1008.77,741.70 L1013.70,741.70 L1018.63,741.70 L1023.55,741.70 L1028.48,741.70 L1033.41,741.70 L1038.34,741.70 L1043.26,741.70 L1048.19,741.70 L1053.12,741.70 L1058.04,741.70 L1062.97,741.70 L1067.90,741.70 L1072.82,741.70 L1077.75,741.70 L1082.68,741.70 L1087.61,741.70 L1092.53,741.70 L1097.46,741.70 L1102.39,741.70 L1107.31,741.70 L1112.24,741.70 L1117.17,741.70 L1122.09,741.70 L1127.02,741.70 L1131.95,741.70 L1136.88,741.70 L1141.80,741.70 L1146.73,741.70 L1151.66,741.70 L1156.58,741.70 L1161.51,741.70 L1166.44,741.70 L1171.36,741.70 L1176.29,712.66 L1181.22,741.70 L1186.14,741.70 L1191.07,741.70 L1196.00,741.70 L1200.93,741.70 L1205.85,741.70 L1210.78,741.70 L1215.71,741.70 L1220.63,741.70 L1225.56,741.70 L1225.56,741.7 Z" fill="#6092c0" fill-opacity="0.5"/>
<polyline points="521.00,741.70 525.93,741.70 530.85,741.70 535.78,741.70 540.71,741.70 545.63,741.70 550.56,741.70 555.49,741.70 560.42,741.70 565.34,741.70 570.27,741.70 575.20,741.70 580.12,741.70 585.05,741.70 589.98,741.70 594.90,741.70 599.83,741.70 604.76,741.70 609.69,741.70 614.61,741.70 619.54,741.70 624.47,741.70 629.39,741.70 634.32,741.70 639.25,741.70 644.17,741.70 649.10,741.70 654.03,741.70 658.96,741.70 663.88,741.70 668.81,741.70 673.74,741.70 678.66,741.70 683.59,741.70 688.52,741.70 693.44,741.70 698.37,741.70 703.30,741.70 708.23,741.70 713.15,741.70 718.08,741.70 723.01,741.70 727.93,741.70 732.86,741.70 737.79,741.70 742.71,741.70 747.64,741.70 752.57,741.70 757.50,741.70 762.42,741.70 767.35,741.70 772.28,741.70 777.20,741.70 782.13,741.70 787.06,741.70 791.98,741.70 796.91,741.70 801.84,741.70 806.77,741.70 811.69,741.70 816.62,741.70 821.55,712.66 826.47,741.70 831.40,741.70 836.33,741.70 841.25,741.70 846.18,741.70 851.11,741.70 856.04,741.70 860.96,741.70 865.89,741.70 870.82,741.70 875.74,741.70 880.67,741.70 885.60,741.70 890.52,741.70 895.45,741.70 900.38,741.70 905.31,741.70 910.23,741.70 915.16,741.70 920.09,741.70 925.01,741.70 929.94,741.70 934.87,741.70 939.79,741.70 944.72,741.70 949.65,741.70 954.58,741.70 959.50,741.70 964.43,741.70 969.36,741.70 974.28,741.70 979.21,741.70 984.14,741.70 989.06,741.70 993.99,741.70 998.92,741.70 1003.85,741.70 1008.77,741.70 1013.70,741.70 1018.63,741.70 1023.55,741.70 1028.48,741.70 1033.41,741.70 1038.34,741.70 1043.26,741.70 1048.19,741.70 1053.12,741.70 1058.04,741.70 1062.97,741.70 1067.90,741.70 1072.82,741.70 1077.75,741.70 1082.68,741.70 1087.61,741.70 1092.53,741.70 1097.46,741.70 1102.39,741.70 1107.31,741.70 1112.24,741.70 1117.17,741.70 1122.09,741.70 1127.02,741.70 1131.95,741.70 1136.88,741.70 1141.80,741.70 1146.73,741.70 1151.66,741.70 1156.58,741.70 1161.51,741.70 1166.44,741.70 1171.36,741.70 1176.29,712.66 1181.22,741.70 1186.14,741.70 1191.07,741.70 1196.00,741.70 1200.93,741.70 1205.85,741.70 1210.78,741.70 1215.71,741.70 1220.63,741.70 1225.56,741.70" fill="none" stroke="#6092c0" stroke-width="1"/>
<path d="M525.93,741.7 L530.85,734.70 L535.78,741.7 Z" fill="#da8b45" fill-opacity="0.8" stroke="#da8b45" stroke-width="1"/>
<path d="M1053.12,741.7 L1058.04,736.40 L1062.97,741.7 Z" fill="#9170b8" fill-opacity="0.8" stroke="#9170b8" stroke-width="1"/>
<path d="M1053.12,741.7 L1058.04,738.71 L1062.97,741.7 Z" fill="#d6bf57" fill-opacity="0.8" stroke="#d6bf57" stroke-width="1"/>
<polyline points="521.00,741.3 525.93,741.3 530.85,741.3 535.78,741.3 540.71,741.3 545.63,741.3 550.56,741.3 555.49,741.3 560.42,741.3 565.34,741.3 570.27,741.3 575.20,741.3 580.12,741.3 585.05,741.3 589.98,741.3 594.90,741.3 599.83,741.3 604.76,741.3 609.69,741.3 614.61,741.3 619.54,741.3 624.47,741.3 629.39,741.3 634.32,741.3 639.25,741.3 644.17,741.3 649.10,741.3 654.03,741.3 658.96,741.3 663.88,741.3 668.81,741.3 673.74,741.3 678.66,741.3 683.59,741.3 688.52,741.3 693.44,741.3 698.37,741.3 703.30,741.3 708.23,741.3 713.15,741.3 718.08,741.3 723.01,741.3 727.93,741.3 732.86,741.3 737.79,741.3 742.71,741.3 747.64,741.3 752.57,741.3 757.50,741.3 762.42,741.3 767.35,741.3 772.28,741.3 777.20,741.3 782.13,741.3 787.06,741.3 791.98,741.3 796.91,741.3 801.84,741.3 806.77,741.3 811.69,741.3 816.62,741.3 821.55,741.3 826.47,741.3 831.40,741.3 836.33,741.3 841.25,741.3 846.18,741.3 851.11,741.3 856.04,741.3 860.96,741.3 865.89,741.3 870.82,741.3 875.74,741.3 880.67,741.3 885.60,741.3 890.52,741.3 895.45,741.3 900.38,741.3 905.31,741.3 910.23,741.3 915.16,741.3 920.09,741.3 925.01,741.3 929.94,741.3 934.87,741.3 939.79,741.3 944.72,741.3 949.65,741.3 954.58,741.3 959.50,741.3 964.43,741.3 969.36,741.3 974.28,741.3 979.21,741.3 984.14,741.3 989.06,741.3 993.99,741.3 998.92,741.3 1003.85,741.3 1008.77,741.3 1013.70,741.3 1018.63,741.3 1023.55,741.3 1028.48,741.3 1033.41,741.3 1038.34,741.3 1043.26,741.3 1048.19,741.3 1053.12,741.3 1058.04,741.3 1062.97,741.3 1067.90,741.3 1072.82,741.3 1077.75,741.3 1082.68,741.3 1087.61,741.3 1092.53,741.3 1097.46,741.3 1102.39,741.3 1107.31,741.3 1112.24,741.3 1117.17,741.3 1122.09,741.3 1127.02,741.3 1131.95,741.3 1136.88,741.3 1141.80,741.3 1146.73,741.3 1151.66,741.3 1156.58,741.3 1161.51,741.3 1166.44,741.3 1171.36,741.3 1176.29,741.3 1181.22,741.3 1186.14,741.3 1191.07,741.3 1196.00,741.3 1200.93,741.3 1205.85,741.3 1210.78,741.3 1215.71,741.3 1220.63,741.3 1225.56,741.3" fill="none" stroke="#d9674d" stroke-width="1"/>
<ellipse cx="521.00" cy="741.2" rx="1.1" ry="1.7" fill="#a9503c" stroke="#d9674d" stroke-width="0.8"/>
<ellipse cx="525.93" cy="741.2" rx="1.1" ry="1.7" fill="#a9503c" stroke="#d9674d" stroke-width="0.8"/>
<ellipse cx="530.85" cy="741.2" rx="1.1" ry="1.7" fill="#a9503c" stroke="#d9674d" stroke-width="0.8"/>
<ellipse cx="535.78" cy="741.2" rx="1.1" ry="1.7" fill="#a9503c" stroke="#d9674d" stroke-width="0.8"/>
<ellipse cx="540.71" cy="741.2" rx="1.1" ry="1.7" fill="#a9503c" stroke="#d9674d" stroke-width="0.8"/>
<ellipse cx="545.63" cy="741.2" rx="1.1" ry="1.7" fill="#a9503c" stroke="#d9674d" stroke-width="0.8"/>
<ellipse cx="550.56" cy="741.2" rx="1.1" ry="1.7" fill="#a9503c" stroke="#d9674d" stroke-width="0.8"/>
<ellipse cx="555.49" cy="741.2" rx="1.1" ry="1.7" fill="#a9503c" stroke="#d9674d" stroke-width="0.8"/>
<ellipse cx="560.42" cy="741.2" rx="1.1" ry="1.7" fill="#a9503c" stroke="#d9674d" stroke-width="0.8"/>
<ellipse cx="565.34" cy="741.2" rx="1.1" ry="1.7" fill="#a9503c" stroke="#d9674d" stroke-width="0.8"/>
<ellipse cx="570.27" cy="741.2" rx="1.1" ry="1.7" fill="#a9503c" stroke="#d9674d" stroke-width="0.8"/>
<ellipse cx="575.20" cy="741.2" rx="1.1" ry="1.7" fill="#a9503c" stroke="#d9674d" stroke-width="0.8"/>
<ellipse cx="580.12" cy="741.2" rx="1.1" ry="1.7" fill="#a9503c" stroke="#d9674d" stroke-width="0.8"/>
<ellipse cx="585.05" cy="741.2" rx="1.1" ry="1.7" fill="#a9503c" stroke="#d9674d" stroke-width="0.8"/>
<ellipse cx="589.98" cy="741.2" rx="1.1" ry="1.7" fill="#a9503c" stroke="#d9674d" stroke-width="0.8"/>
<ellipse cx="594.90" cy="741.2" rx="1.1" ry="1.7" fill="#a9503c" stroke="#d9674d" stroke-width="0.8"/>
<ellipse cx="599.83" cy="741.2" rx="1.1" ry="1.7" fill="#a9503c" stroke="#d9674d" stroke-width="0.8"/>
<ellipse cx="604.76" cy="741.2" rx="1.1" ry="1.7" fill="#a9503c" stroke="#d9674d" stroke-width="0.8"/>
<ellipse cx="609.69" cy="741.2" rx="1.1" ry="1.7" fill="#a9503c" stroke="#d9674d" stroke-width="0.8"/>
<ellipse cx="614.61" cy="741.2" rx="1.1" ry="1.7" fill="#a9503c" stroke="#d9674d" stroke-width="0.8"/>
<ellipse cx="619.54" cy="741.2" rx="1.1" ry="1.7" fill="#a9503c" stroke="#d9674d" stroke-width="0.8"/>
<ellipse cx="624.47" cy="741.2" rx="1.1" ry="1.7" fill="#a9503c" stroke="#d9674d" stroke-width="0.8"/>
<ellipse cx="629.39" cy="741.2" rx="1.1" ry="1.7" fill="#a9503c" stroke="#d9674d" stroke-width="0.8"/>
<ellipse cx="634.32" cy="741.2" rx="1.1" ry="1.7" fill="#a9503c" stroke="#d9674d" stroke-width="0.8"/>
<ellipse cx="639.25" cy="741.2" rx="1.1" ry="1.7" fill="#a9503c" stroke="#d9674d" stroke-width="0.8"/>
<ellipse cx="644.17" cy="741.2" rx="1.1" ry="1.7" fill="#a9503c" stroke="#d9674d" stroke-width="0.8"/>
<ellipse cx="649.10" cy="741.2" rx="1.1" ry="1.7" fill="#a9503c" stroke="#d9674d" stroke-width="0.8"/>
<ellipse cx="654.03" cy="741.2" rx="1.1" ry="1.7" fill="#a9503c" stroke="#d9674d" stroke-width="0.8"/>
<ellipse cx="658.96" cy="741.2" rx="1.1" ry="1.7" fill="#a9503c" stroke="#d9674d" stroke-width="0.8"/>
<ellipse cx="663.88" cy="741.2" rx="1.1" ry="1.7" fill="#a9503c" stroke="#d9674d" stroke-width="0.8"/>
<ellipse cx="668.81" cy="741.2" rx="1.1" ry="1.7" fill="#a9503c" stroke="#d9674d" stroke-width="0.8"/>
<ellipse cx="673.74" cy="741.2" rx="1.1" ry="1.7" fill="#a9503c" stroke="#d9674d" stroke-width="0.8"/>
<ellipse cx="678.66" cy="741.2" rx="1.1" ry="1.7" fill="#a9503c" stroke="#d9674d" stroke-width="0.8"/>
<ellipse cx="683.59" cy="741.2" rx="1.1" ry="1.7" fill="#a9503c" stroke="#d9674d" stroke-width="0.8"/>
<ellipse cx="688.52" cy="741.2" rx="1.1" ry="1.7" fill="#a9503c" stroke="#d9674d" stroke-width="0.8"/>
<ellipse cx="693.44" cy="741.2" rx="1.1" ry="1.7" fill="#a9503c" stroke="#d9674d" stroke-width="0.8"/>
<ellipse cx="698.37" cy="741.2" rx="1.1" ry="1.7" fill="#a9503c" stroke="#d9674d" stroke-width="0.8"/>
<ellipse cx="703.30" cy="741.2" rx="1.1" ry="1.7" fill="#a9503c" stroke="#d9674d" stroke-width="0.8"/>
<ellipse cx="708.23" cy="741.2" rx="1.1" ry="1.7" fill="#a9503c" stroke="#d9674d" stroke-width="0.8"/>
<ellipse cx="713.15" cy="741.2" rx="1.1" ry="1.7" fill="#a9503c" stroke="#d9674d" stroke-width="0.8"/>
<ellipse cx="718.08" cy="741.2" rx="1.1" ry="1.7" fill="#a9503c" stroke="#d9674d" stroke-width="0.8"/>
<ellipse cx="723.01" cy="741.2" rx="1.1" ry="1.7" fill="#a9503c" stroke="#d9674d" stroke-width="0.8"/>
<ellipse cx="727.93" cy="741.2" rx="1.1" ry="1.7" fill="#a9503c" stroke="#d9674d" stroke-width="0.8"/>
<ellipse cx="732.86" cy="741.2" rx="1.1" ry="1.7" fill="#a9503c" stroke="#d9674d" stroke-width="0.8"/>
<ellipse cx="737.79" cy="741.2" rx="1.1" ry="1.7" fill="#a9503c" stroke="#d9674d" stroke-width="0.8"/>
<ellipse cx="742.71" cy="741.2" rx="1.1" ry="1.7" fill="#a9503c" stroke="#d9674d" stroke-width="0.8"/>
<ellipse cx="747.64" cy="741.2" rx="1.1" ry="1.7" fill="#a9503c" stroke="#d9674d" stroke-width="0.8"/>
<ellipse cx="752.57" cy="741.2" rx="1.1" ry="1.7" fill="#a9503c" stroke="#d9674d" stroke-width="0.8"/>
<ellipse cx="757.50" cy="741.2" rx="1.1" ry="1.7" fill="#a9503c" stroke="#d9674d" stroke-width="0.8"/>
<ellipse cx="762.42" cy="741.2" rx="1.1" ry="1.7" fill="#a9503c" stroke="#d9674d" stroke-width="0.8"/>
<ellipse cx="767.35" cy="741.2" rx="1.1" ry="1.7" fill="#a9503c" stroke="#d9674d" stroke-width="0.8"/>
<ellipse cx="772.28" cy="741.2" rx="1.1" ry="1.7" fill="#a9503c" stroke="#d9674d" stroke-width="0.8"/>
<ellipse cx="777.20" cy="741.2" rx="1.1" ry="1.7" fill="#a9503c" stroke="#d9674d" stroke-width="0.8"/>
<ellipse cx="782.13" cy="741.2" rx="1.1" ry="1.7" fill="#a9503c" stroke="#d9674d" stroke-width="0.8"/>
<ellipse cx="787.06" cy="741.2" rx="1.1" ry="1.7" fill="#a9503c" stroke="#d9674d" stroke-width="0.8"/>
<ellipse cx="791.98" cy="741.2" rx="1.1" ry="1.7" fill="#a9503c" stroke="#d9674d" stroke-width="0.8"/>
<ellipse cx="796.91" cy="741.2" rx="1.1" ry="1.7" fill="#a9503c" stroke="#d9674d" stroke-width="0.8"/>
<ellipse cx="801.84" cy="741.2" rx="1.1" ry="1.7" fill="#a9503c" stroke="#d9674d" stroke-width="0.8"/>
<ellipse cx="806.77" cy="741.2" rx="1.1" ry="1.7" fill="#a9503c" stroke="#d9674d" stroke-width="0.8"/>
<ellipse cx="811.69" cy="741.2" rx="1.1" ry="1.7" fill="#a9503c" stroke="#d9674d" stroke-width="0.8"/>
<ellipse cx="816.62" cy="741.2" rx="1.1" ry="1.7" fill="#a9503c" stroke="#d9674d" stroke-width="0.8"/>
<ellipse cx="821.55" cy="741.2" rx="1.1" ry="1.7" fill="#a9503c" stroke="#d9674d" stroke-width="0.8"/>
<ellipse cx="826.47" cy="741.2" rx="1.1" ry="1.7" fill="#a9503c" stroke="#d9674d" stroke-width="0.8"/>
<ellipse cx="831.40" cy="741.2" rx="1.1" ry="1.7" fill="#a9503c" stroke="#d9674d" stroke-width="0.8"/>
<ellipse cx="836.33" cy="741.2" rx="1.1" ry="1.7" fill="#a9503c" stroke="#d9674d" stroke-width="0.8"/>
<ellipse cx="841.25" cy="741.2" rx="1.1" ry="1.7" fill="#a9503c" stroke="#d9674d" stroke-width="0.8"/>
<ellipse cx="846.18" cy="741.2" rx="1.1" ry="1.7" fill="#a9503c" stroke="#d9674d" stroke-width="0.8"/>
<ellipse cx="851.11" cy="741.2" rx="1.1" ry="1.7" fill="#a9503c" stroke="#d9674d" stroke-width="0.8"/>
<ellipse cx="856.04" cy="741.2" rx="1.1" ry="1.7" fill="#a9503c" stroke="#d9674d" stroke-width="0.8"/>
<ellipse cx="860.96" cy="741.2" rx="1.1" ry="1.7" fill="#a9503c" stroke="#d9674d" stroke-width="0.8"/>
<ellipse cx="865.89" cy="741.2" rx="1.1" ry="1.7" fill="#a9503c" stroke="#d9674d" stroke-width="0.8"/>
<ellipse cx="870.82" cy="741.2" rx="1.1" ry="1.7" fill="#a9503c" stroke="#d9674d" stroke-width="0.8"/>
<ellipse cx="875.74" cy="741.2" rx="1.1" ry="1.7" fill="#a9503c" stroke="#d9674d" stroke-width="0.8"/>
<ellipse cx="880.67" cy="741.2" rx="1.1" ry="1.7" fill="#a9503c" stroke="#d9674d" stroke-width="0.8"/>
<ellipse cx="885.60" cy="741.2" rx="1.1" ry="1.7" fill="#a9503c" stroke="#d9674d" stroke-width="0.8"/>
<ellipse cx="890.52" cy="741.2" rx="1.1" ry="1.7" fill="#a9503c" stroke="#d9674d" stroke-width="0.8"/>
<ellipse cx="895.45" cy="741.2" rx="1.1" ry="1.7" fill="#a9503c" stroke="#d9674d" stroke-width="0.8"/>
<ellipse cx="900.38" cy="741.2" rx="1.1" ry="1.7" fill="#a9503c" stroke="#d9674d" stroke-width="0.8"/>
<ellipse cx="905.31" cy="741.2" rx="1.1" ry="1.7" fill="#a9503c" stroke="#d9674d" stroke-width="0.8"/>
<ellipse cx="910.23" cy="741.2" rx="1.1" ry="1.7" fill="#a9503c" stroke="#d9674d" stroke-width="0.8"/>
<ellipse cx="915.16" cy="741.2" rx="1.1" ry="1.7" fill="#a9503c" stroke="#d9674d" stroke-width="0.8"/>
<ellipse cx="920.09" cy="741.2" rx="1.1" ry="1.7" fill="#a9503c" stroke="#d9674d" stroke-width="0.8"/>
<ellipse cx="925.01" cy="741.2" rx="1.1" ry="1.7" fill="#a9503c" stroke="#d9674d" stroke-width="0.8"/>
<ellipse cx="929.94" cy="741.2" rx="1.1" ry="1.7" fill="#a9503c" stroke="#d9674d" stroke-width="0.8"/>
<ellipse cx="934.87" cy="741.2" rx="1.1" ry="1.7" fill="#a9503c" stroke="#d9674d" stroke-width="0.8"/>
<ellipse cx="939.79" cy="741.2" rx="1.1" ry="1.7" fill="#a9503c" stroke="#d9674d" stroke-width="0.8"/>
<ellipse cx="944.72" cy="741.2" rx="1.1" ry="1.7" fill="#a9503c" stroke="#d9674d" stroke-width="0.8"/>
<ellipse cx="949.65" cy="741.2" rx="1.1" ry="1.7" fill="#a9503c" stroke="#d9674d" stroke-width="0.8"/>
<ellipse cx="954.58" cy="741.2" rx="1.1" ry="1.7" fill="#a9503c" stroke="#d9674d" stroke-width="0.8"/>
<ellipse cx="959.50" cy="741.2" rx="1.1" ry="1.7" fill="#a9503c" stroke="#d9674d" stroke-width="0.8"/>
<ellipse cx="964.43" cy="741.2" rx="1.1" ry="1.7" fill="#a9503c" stroke="#d9674d" stroke-width="0.8"/>
<ellipse cx="969.36" cy="741.2" rx="1.1" ry="1.7" fill="#a9503c" stroke="#d9674d" stroke-width="0.8"/>
<ellipse cx="974.28" cy="741.2" rx="1.1" ry="1.7" fill="#a9503c" stroke="#d9674d" stroke-width="0.8"/>
<ellipse cx="979.21" cy="741.2" rx="1.1" ry="1.7" fill="#a9503c" stroke="#d9674d" stroke-width="0.8"/>
<ellipse cx="984.14" cy="741.2" rx="1.1" ry="1.7" fill="#a9503c" stroke="#d9674d" stroke-width="0.8"/>
<ellipse cx="989.06" cy="741.2" rx="1.1" ry="1.7" fill="#a9503c" stroke="#d9674d" stroke-width="0.8"/>
<ellipse cx="993.99" cy="741.2" rx="1.1" ry="1.7" fill="#a9503c" stroke="#d9674d" stroke-width="0.8"/>
<ellipse cx="998.92" cy="741.2" rx="1.1" ry="1.7" fill="#a9503c" stroke="#d9674d" stroke-width="0.8"/>
<ellipse cx="1003.85" cy="741.2" rx="1.1" ry="1.7" fill="#a9503c" stroke="#d9674d" stroke-width="0.8"/>
<ellipse cx="1008.77" cy="741.2" rx="1.1" ry="1.7" fill="#a9503c" stroke="#d9674d" stroke-width="0.8"/>
<ellipse cx="1013.70" cy="741.2" rx="1.1" ry="1.7" fill="#a9503c" stroke="#d9674d" stroke-width="0.8"/>
<ellipse cx="1018.63" cy="741.2" rx="1.1" ry="1.7" fill="#a9503c" stroke="#d9674d" stroke-width="0.8"/>
<ellipse cx="1023.55" cy="741.2" rx="1.1" ry="1.7" fill="#a9503c" stroke="#d9674d" stroke-width="0.8"/>
<ellipse cx="1028.48" cy="741.2" rx="1.1" ry="1.7" fill="#a9503c" stroke="#d9674d" stroke-width="0.8"/>
<ellipse cx="1033.41" cy="741.2" rx="1.1" ry="1.7" fill="#a9503c" stroke="#d9674d" stroke-width="0.8"/>
<ellipse cx="1038.34" cy="741.2" rx="1.1" ry="1.7" fill="#a9503c" stroke="#d9674d" stroke-width="0.8"/>
<ellipse cx="1043.26" cy="741.2" rx="1.1" ry="1.7" fill="#a9503c" stroke="#d9674d" stroke-width="0.8"/>
<ellipse cx="1048.19" cy="741.2" rx="1.1" ry="1.7" fill="#a9503c" stroke="#d9674d" stroke-width="0.8"/>
<ellipse cx="1053.12" cy="741.2" rx="1.1" ry="1.7" fill="#a9503c" stroke="#d9674d" stroke-width="0.8"/>
<ellipse cx="1058.04" cy="741.2" rx="1.1" ry="1.7" fill="#a9503c" stroke="#d9674d" stroke-width="0.8"/>
<ellipse cx="1062.97" cy="741.2" rx="1.1" ry="1.7" fill="#a9503c" stroke="#d9674d" stroke-width="0.8"/>
<ellipse cx="1067.90" cy="741.2" rx="1.1" ry="1.7" fill="#a9503c" stroke="#d9674d" stroke-width="0.8"/>
<ellipse cx="1072.82" cy="741.2" rx="1.1" ry="1.7" fill="#a9503c" stroke="#d9674d" stroke-width="0.8"/>
<ellipse cx="1077.75" cy="741.2" rx="1.1" ry="1.7" fill="#a9503c" stroke="#d9674d" stroke-width="0.8"/>
<ellipse cx="1082.68" cy="741.2" rx="1.1" ry="1.7" fill="#a9503c" stroke="#d9674d" stroke-width="0.8"/>
<ellipse cx="1087.61" cy="741.2" rx="1.1" ry="1.7" fill="#a9503c" stroke="#d9674d" stroke-width="0.8"/>
<ellipse cx="1092.53" cy="741.2" rx="1.1" ry="1.7" fill="#a9503c" stroke="#d9674d" stroke-width="0.8"/>
<ellipse cx="1097.46" cy="741.2" rx="1.1" ry="1.7" fill="#a9503c" stroke="#d9674d" stroke-width="0.8"/>
<ellipse cx="1102.39" cy="741.2" rx="1.1" ry="1.7" fill="#a9503c" stroke="#d9674d" stroke-width="0.8"/>
<ellipse cx="1107.31" cy="741.2" rx="1.1" ry="1.7" fill="#a9503c" stroke="#d9674d" stroke-width="0.8"/>
<ellipse cx="1112.24" cy="741.2" rx="1.1" ry="1.7" fill="#a9503c" stroke="#d9674d" stroke-width="0.8"/>
<ellipse cx="1117.17" cy="741.2" rx="1.1" ry="1.7" fill="#a9503c" stroke="#d9674d" stroke-width="0.8"/>
<ellipse cx="1122.09" cy="741.2" rx="1.1" ry="1.7" fill="#a9503c" stroke="#d9674d" stroke-width="0.8"/>
<ellipse cx="1127.02" cy="741.2" rx="1.1" ry="1.7" fill="#a9503c" stroke="#d9674d" stroke-width="0.8"/>
<ellipse cx="1131.95" cy="741.2" rx="1.1" ry="1.7" fill="#a9503c" stroke="#d9674d" stroke-width="0.8"/>
<ellipse cx="1136.88" cy="741.2" rx="1.1" ry="1.7" fill="#a9503c" stroke="#d9674d" stroke-width="0.8"/>
<ellipse cx="1141.80" cy="741.2" rx="1.1" ry="1.7" fill="#a9503c" stroke="#d9674d" stroke-width="0.8"/>
<ellipse cx="1146.73" cy="741.2" rx="1.1" ry="1.7" fill="#a9503c" stroke="#d9674d" stroke-width="0.8"/>
<ellipse cx="1151.66" cy="741.2" rx="1.1" ry="1.7" fill="#a9503c" stroke="#d9674d" stroke-width="0.8"/>
<ellipse cx="1156.58" cy="741.2" rx="1.1" ry="1.7" fill="#a9503c" stroke="#d9674d" stroke-width="0.8"/>
<ellipse cx="1161.51" cy="741.2" rx="1.1" ry="1.7" fill="#a9503c" stroke="#d9674d" stroke-width="0.8"/>
<ellipse cx="1166.44" cy="741.2" rx="1.1" ry="1.7" fill="#a9503c" stroke="#d9674d" stroke-width="0.8"/>
<ellipse cx="1171.36" cy="741.2" rx="1.1" ry="1.7" fill="#a9503c" stroke="#d9674d" stroke-width="0.8"/>
<ellipse cx="1176.29" cy="741.2" rx="1.1" ry="1.7" fill="#a9503c" stroke="#d9674d" stroke-width="0.8"/>
<ellipse cx="1181.22" cy="741.2" rx="1.1" ry="1.7" fill="#a9503c" stroke="#d9674d" stroke-width="0.8"/>
<ellipse cx="1186.14" cy="741.2" rx="1.1" ry="1.7" fill="#a9503c" stroke="#d9674d" stroke-width="0.8"/>
<ellipse cx="1191.07" cy="741.2" rx="1.1" ry="1.7" fill="#a9503c" stroke="#d9674d" stroke-width="0.8"/>
<ellipse cx="1196.00" cy="741.2" rx="1.1" ry="1.7" fill="#a9503c" stroke="#d9674d" stroke-width="0.8"/>
<ellipse cx="1200.93" cy="741.2" rx="1.1" ry="1.7" fill="#a9503c" stroke="#d9674d" stroke-width="0.8"/>
<ellipse cx="1205.85" cy="741.2" rx="1.1" ry="1.7" fill="#a9503c" stroke="#d9674d" stroke-width="0.8"/>
<ellipse cx="1210.78" cy="741.2" rx="1.1" ry="1.7" fill="#a9503c" stroke="#d9674d" stroke-width="0.8"/>
<ellipse cx="1215.71" cy="741.2" rx="1.1" ry="1.7" fill="#a9503c" stroke="#d9674d" stroke-width="0.8"/>
<ellipse cx="1220.63" cy="741.2" rx="1.1" ry="1.7" fill="#a9503c" stroke="#d9674d" stroke-width="0.8"/>
<ellipse cx="1225.56" cy="741.2" rx="1.1" ry="1.7" fill="#a9503c" stroke="#d9674d" stroke-width="0.8"/>
<circle cx="1262" cy="554" r="4" fill="#54b399"/>
<text x="1274.20" y="558.20" font-size="13" fill="#dfe5ef" textLength="155.60" lengthAdjust="spacingAndGlyphs">Sysmon - Event 1: Proc...</text>
<text x="1450.00" y="555.60" font-size="12" fill="#dfe5ef" text-anchor="end" textLength="14.63" lengthAdjust="spacingAndGlyphs">36</text>
<circle cx="1262" cy="576" r="4" fill="#6092c0"/>
<text x="1274.20" y="580.20" font-size="13" fill="#dfe5ef" textLength="164.00" lengthAdjust="spacingAndGlyphs">Host-based anomaly det...</text>
<text x="1450.00" y="577.60" font-size="12" fill="#dfe5ef" text-anchor="end" textLength="7.32" lengthAdjust="spacingAndGlyphs">0</text>
<circle cx="1262" cy="598" r="4" fill="#d36086"/>
<text x="1274.20" y="602.20" font-size="13" fill="#dfe5ef" textLength="149.80" lengthAdjust="spacingAndGlyphs">Windows logon success.</text>
<text x="1450.00" y="599.60" font-size="12" fill="#dfe5ef" text-anchor="end" textLength="7.32" lengthAdjust="spacingAndGlyphs">2</text>
<circle cx="1262" cy="620" r="4" fill="#9170b8"/>
<text x="1274.20" y="624.20" font-size="13" fill="#dfe5ef" textLength="163.30" lengthAdjust="spacingAndGlyphs">Sysmon - Event 1: Proce...</text>
<text x="1450.00" y="621.60" font-size="12" fill="#dfe5ef" text-anchor="end" textLength="7.32" lengthAdjust="spacingAndGlyphs">0</text>
<circle cx="1262" cy="642" r="4" fill="#ca8eae"/>
<text x="1274.20" y="646.20" font-size="13" fill="#dfe5ef" textLength="163.30" lengthAdjust="spacingAndGlyphs">Sysmon - Event 1: Proce...</text>
<text x="1450.00" y="643.60" font-size="12" fill="#dfe5ef" text-anchor="end" textLength="7.32" lengthAdjust="spacingAndGlyphs">2</text>
<circle cx="1262" cy="664" r="4" fill="#d6bf57"/>
<text x="1274.20" y="668.20" font-size="13" fill="#dfe5ef" textLength="163.30" lengthAdjust="spacingAndGlyphs">Discovery activity execu...</text>
<text x="1450.00" y="665.60" font-size="12" fill="#dfe5ef" text-anchor="end" textLength="7.32" lengthAdjust="spacingAndGlyphs">0</text>
<circle cx="1262" cy="686" r="4" fill="#b9a888"/>
<text x="1274.20" y="690.20" font-size="13" fill="#dfe5ef" textLength="158.20" lengthAdjust="spacingAndGlyphs">Registry Key Integrity C...</text>
<text x="1450.00" y="687.60" font-size="12" fill="#dfe5ef" text-anchor="end" textLength="7.32" lengthAdjust="spacingAndGlyphs">0</text>
<circle cx="1262" cy="708" r="4" fill="#da8b45"/>
<text x="1274.20" y="712.20" font-size="13" fill="#dfe5ef" textLength="161.10" lengthAdjust="spacingAndGlyphs">Registry Value Integrity ...</text>
<text x="1450.00" y="709.60" font-size="12" fill="#dfe5ef" text-anchor="end" textLength="7.32" lengthAdjust="spacingAndGlyphs">0</text>
<circle cx="1262" cy="730" r="4" fill="#aa6556"/>
<text x="1274.20" y="734.20" font-size="13" fill="#dfe5ef" textLength="162.30" lengthAdjust="spacingAndGlyphs">Unknown problem some...</text>
<text x="1450.00" y="731.60" font-size="12" fill="#dfe5ef" text-anchor="end" textLength="7.32" lengthAdjust="spacingAndGlyphs">0</text>
<circle cx="1262" cy="752" r="4" fill="#e7664c"/>
<text x="1274.20" y="756.20" font-size="13" fill="#dfe5ef" textLength="156.50" lengthAdjust="spacingAndGlyphs">Exclude same usernam...</text>
<text x="1450.00" y="753.60" font-size="12" fill="#dfe5ef" text-anchor="end" textLength="7.32" lengthAdjust="spacingAndGlyphs">0</text>
</svg>
</body></html>
